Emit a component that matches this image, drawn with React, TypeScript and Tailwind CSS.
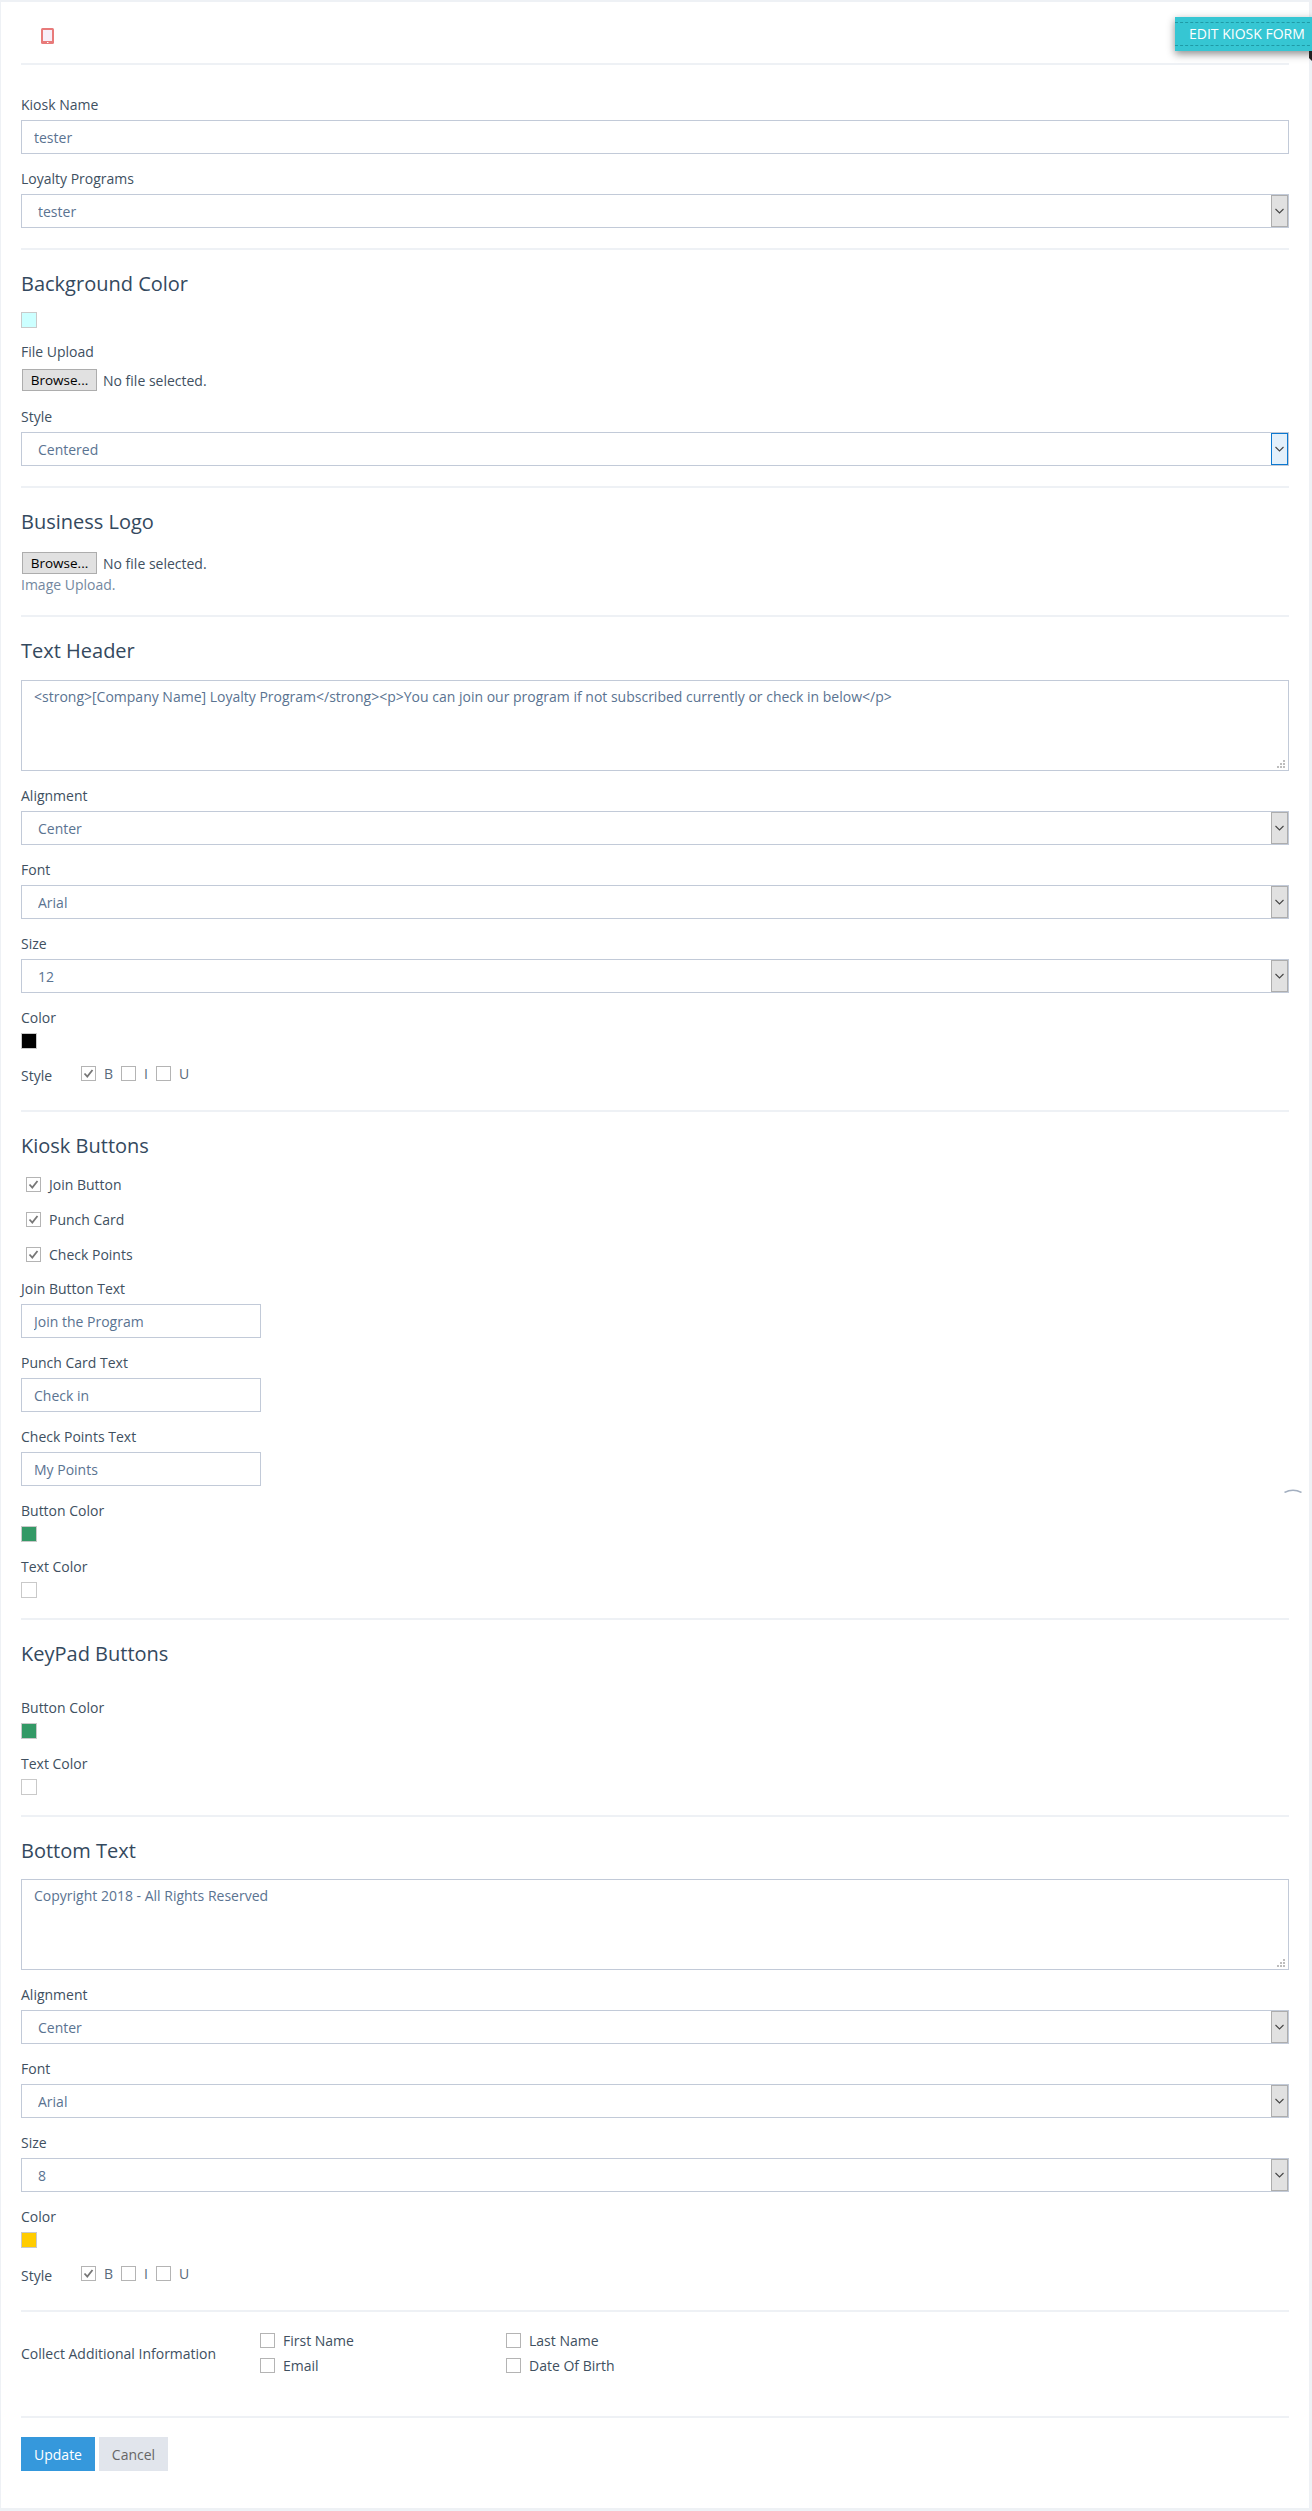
import React from 'react';

const Divider = ({ className = '' }: { className?: string }) => <div className={`h-[2px] bg-[#eef1f5] ${className}`} />;

const Label = ({ children }: { children: React.ReactNode }) => (
  <label className="block mb-[5px] text-[14px] leading-[20px] text-[#40505f]">{children}</label>
);

const Heading = ({ children, className = '' }: { children: React.ReactNode; className?: string }) => (
  <h3 className={`text-[20px] leading-[24px] text-[#34495e] ${className}`}>{children}</h3>
);

const TextInput = ({ value, narrow }: { value: string; narrow?: boolean }) => (
  <input
    readOnly
    value={value}
    className={`block h-[34px] px-[12px] border border-[#c2cad8] bg-white text-[14px] text-[#5a7391] outline-none ${narrow ? 'w-[240px]' : 'w-full'}`}
  />
);

const Select = ({ value, focused }: { value: string; focused?: boolean }) => (
  <div className="relative h-[34px] w-full border border-[#c2cad8] bg-white">
    <select
      value={value}
      onChange={() => {}}
      className="block h-full w-full appearance-none bg-transparent pl-[16px] pr-[24px] text-[14px] text-[#5a7391] outline-none"
    >
      <option>{value}</option>
    </select>
    <span
      className={`absolute right-0 top-0 bottom-0 w-[17px] flex items-center justify-center border pointer-events-none ${
        focused ? 'border-[#0b78d0] bg-[#e3f0fb]' : 'border-[#adadad] bg-[#e1e1e1]'
      }`}
    >
      <svg width="9" height="6" viewBox="0 0 9 6" fill="none" stroke="#444" strokeWidth="1.1">
        <path d="M0.5 1 L4.5 5 L8.5 1" />
      </svg>
    </span>
  </div>
);

const Swatch = ({ color }: { color: string }) => (
  <div className="w-[16px] h-[16px] border border-[#c9c9c9]" style={{ backgroundColor: color }} />
);

const Check = ({ checked }: { checked?: boolean }) => (
  <span className="inline-flex shrink-0 items-center justify-center w-[15px] h-[15px] border border-[#b4b4b4] bg-white">
    {checked && (
      <svg width="11" height="11" viewBox="0 0 11 11" fill="none" stroke="#777" strokeWidth="1.8">
        <path d="M1.5 5.5 L4.3 8.5 L9.5 2" />
      </svg>
    )}
  </span>
);

const FileField = () => (
  <div className="flex items-center h-[22px]">
    <button className="ml-[1px] w-[75px] h-[22px] bg-[#e1e1e1] border border-[#adadad] text-[13.5px] text-black">Browse...</button>
    <span className="ml-[6px] text-[14px] text-[#40505f]">No file selected.</span>
  </div>
);

const Field = ({ label, children }: { label: string; children: React.ReactNode }) => (
  <div className="mb-[15px]">
    <Label>{label}</Label>
    {children}
  </div>
);

const StyleRow = () => (
  <div className="flex items-center h-[15px] text-[14px] text-[#40505f]">
    <span className="w-[60px] mt-[3px]">Style</span>
    <Check checked />
    <span className="ml-[8px] w-[17px] text-[#5a6b7b]">B</span>
    <Check />
    <span className="ml-[8px] w-[12px] text-[#5a6b7b]">I</span>
    <Check />
    <span className="ml-[8px] text-[#5a6b7b]">U</span>
  </div>
);

const TextArea = ({ value }: { value: string }) => (
  <div className="relative">
    <textarea
      readOnly
      value={value}
      className="block w-full h-[91px] resize-none px-[12px] py-[6px] border border-[#c2cad8] bg-white text-[14px] leading-[20px] text-[#5a7391] outline-none"
    />
    {/* resize grip */}
    <svg width="8" height="8" viewBox="0 0 8 8" fill="#bdbdbd" className="absolute right-[4px] bottom-[3px]">
      <rect x="6" y="0" width="2" height="2" />
      <rect x="3" y="3" width="2" height="2" />
      <rect x="6" y="3" width="2" height="2" />
      <rect x="0" y="6" width="2" height="2" />
      <rect x="3" y="6" width="2" height="2" />
      <rect x="6" y="6" width="2" height="2" />
    </svg>
  </div>
);

const CheckLine = ({ label }: { label: string }) => (
  <div className="flex items-center h-[15px] pl-[5px] text-[14px] text-[#40505f]">
    <Check checked />
    <span className="ml-[8px]">{label}</span>
  </div>
);

const InfoCheck = ({ label }: { label: string }) => (
  <div className="flex items-center h-[15px] text-[14px] text-[#40505f]">
    <Check />
    <span className="ml-[8px]">{label}</span>
  </div>
);

export default function App() {
  return (
    <div className="min-h-[2511px] w-[1312px] overflow-hidden bg-[#eef1f5] pt-[2px] pl-[1px] pr-[3px] font-['Open_Sans',sans-serif]">
      <div className="relative h-[2506px] bg-white px-[20px]">
        {/* Title bar */}
        <div className="h-[63px] pl-[20px] pt-[26px] border-b-2 border-[#eef1f5]">
          <svg width="13" height="16" viewBox="0 0 13 16" className="block">
            <rect x="0" y="0" width="13" height="16" rx="1.5" fill="#e87a7a" />
            <rect x="2" y="2" width="9" height="11" fill="#f7eef8" />
            <rect x="6" y="14" width="1.5" height="1" fill="#ffffff" />
          </svg>
        </div>
        <div className="absolute left-[1174px] top-[15px] w-[140px] h-[34px] bg-[#36c6d3] text-white text-[14px] leading-[34px] pl-[14px] whitespace-nowrap shadow-[0_3px_8px_rgba(0,0,0,0.45)]">
          <span className="absolute left-0 right-0 top-[5px] border-t border-dashed border-[#1f9aa6]" />
          <span className="absolute left-0 right-0 bottom-[5px] border-t border-dashed border-[#1f9aa6]" />
          EDIT KIOSK FORM
        </div>
        {/* ribbon fold */}
        <svg width="3" height="10" viewBox="0 0 3 10" className="absolute left-[1308px] top-[49px]">
          <path d="M0 0 H3 V10 L0 7 Z" fill="#222222" />
        </svg>
        {/* spinner arc */}
        <svg width="18" height="4" viewBox="0 0 18 4" fill="none" className="absolute left-[1283px] top-[1487px]">
          <path d="M0.5 3.5 Q9 -1 17.5 3.5" stroke="#a3afc0" strokeWidth="1.5" />
        </svg>

        <div className="pt-[30px]">
          <Field label="Kiosk Name"><TextInput value="tester" /></Field>
          <Label>Loyalty Programs</Label>
          <Select value="tester" />
        </div>

        <Divider className="mt-[20px] mb-[22px]" />
        <Heading className="mb-[16px]">Background Color</Heading>
        <Swatch color="#ccffff" />
        <div className="mt-[14px]"><Label>File Upload</Label></div>
        <div className="mt-[7px]"><FileField /></div>
        <div className="mt-[16px]"><Label>Style</Label></div>
        <Select value="Centered" focused />

        <Divider className="mt-[20px] mb-[22px]" />
        <Heading className="mb-[18px]">Business Logo</Heading>
        <FileField />
        <p className="mt-[1px] text-[14px] leading-[20px] text-[#7488a0]">Image Upload.</p>

        <Divider className="mt-[20px] mb-[22px]" />
        <Heading className="mb-[17px]">Text Header</Heading>
        <TextArea value="<strong>[Company Name] Loyalty Program</strong><p>You can join our program if not subscribed currently or check in below</p>" />
        <div className="mt-[15px]"><Field label="Alignment"><Select value="Center" /></Field></div>
        <Field label="Font"><Select value="Arial" /></Field>
        <Field label="Size"><Select value="12" /></Field>
        <Label>Color</Label>
        <Swatch color="#000000" />
        <div className="mt-[17px]"><StyleRow /></div>

        <Divider className="mt-[29px] mb-[22px]" />
        <Heading className="mb-[19px]">Kiosk Buttons</Heading>
        <div className="flex flex-col gap-[20px] mb-[17px]">
          <CheckLine label="Join Button" />
          <CheckLine label="Punch Card" />
          <CheckLine label="Check Points" />
        </div>
        <Field label="Join Button Text"><TextInput narrow value="Join the Program" /></Field>
        <Field label="Punch Card Text"><TextInput narrow value="Check in" /></Field>
        <Field label="Check Points Text"><TextInput narrow value="My Points" /></Field>
        <Label>Button Color</Label>
        <Swatch color="#339966" />
        <div className="mt-[15px]"><Label>Text Color</Label></div>
        <Swatch color="#ffffff" />

        <Divider className="mt-[20px] mb-[22px]" />
        <Heading className="mb-[32px]">KeyPad Buttons</Heading>
        <Label>Button Color</Label>
        <Swatch color="#339966" />
        <div className="mt-[15px]"><Label>Text Color</Label></div>
        <Swatch color="#ffffff" />

        <Divider className="mt-[20px] mb-[22px]" />
        <Heading className="mb-[16px]">Bottom Text</Heading>
        <TextArea value="Copyright 2018 - All Rights Reserved" />
        <div className="mt-[15px]"><Field label="Alignment"><Select value="Center" /></Field></div>
        <Field label="Font"><Select value="Arial" /></Field>
        <Field label="Size"><Select value="8" /></Field>
        <Label>Color</Label>
        <Swatch color="#ffcc00" />
        <div className="mt-[18px]"><StyleRow /></div>

        <Divider className="mt-[29px] mb-[21px]" />
        <div className="flex items-center text-[14px] text-[#40505f]">
          <span className="w-[239px]">Collect Additional Information</span>
          <div className="grid grid-cols-[246px_200px] gap-y-[10px]">
            <InfoCheck label="First Name" />
            <InfoCheck label="Last Name" />
            <InfoCheck label="Email" />
            <InfoCheck label="Date Of Birth" />
          </div>
        </div>

        <Divider className="mt-[43px] mb-[19px]" />
        <div className="flex gap-[4px]">
          <button className="w-[74px] h-[34px] bg-[#3598dc] text-white text-[14px]">Update</button>
          <button className="w-[69px] h-[34px] bg-[#e1e5ec] text-[#666] text-[14px]">Cancel</button>
        </div>
      </div>
    </div>
  );
}
